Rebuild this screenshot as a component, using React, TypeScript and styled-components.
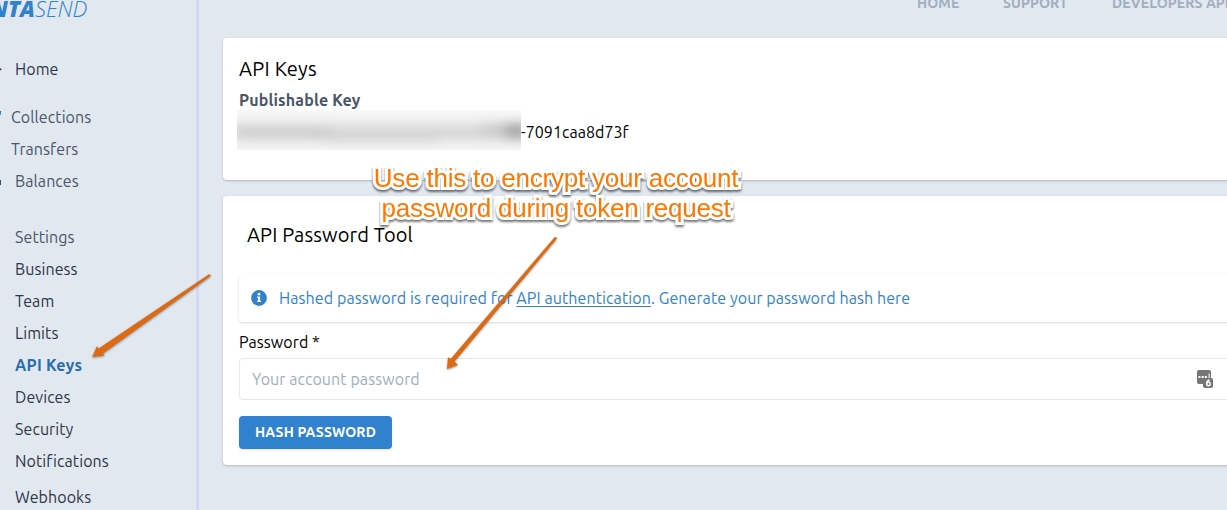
import React from "react";
import styled, { createGlobalStyle } from "styled-components";

const GlobalStyle = createGlobalStyle`
  * { box-sizing: border-box; }
  html, body { margin: 0; padding: 0; overflow: hidden; background: #e2e8f0; }
  body { font-family: Ubuntu, "Noto Sans", sans-serif; font-size: 16px; line-height: 24px; color: #000; }
`;

const Page = styled.div`
  position: relative;
  display: flex;
  width: 1227px;
  height: 510px;
  overflow: hidden;
  background: #e2e8f0;
`;

const Sidebar = styled.aside`
  flex: 0 0 199px;
  height: 510px;
  border-right: 3px solid #d4d8f6;
  overflow: hidden;
`;

const Logo = styled.div`
  height: 53px;
  margin-left: -9.5px;
  font: italic 300 22px/17px "Open Sans", sans-serif;
  color: #3182ce;
  white-space: nowrap;
  b { font-weight: 800; }
`;

const NavGroup = styled.nav<{ $gap: number }>`
  display: flex;
  flex-direction: column;
  margin-bottom: ${(p) => p.$gap}px;
`;

const NavItem = styled.a<{ $tone?: "muted" | "active"; $indent?: number }>`
  display: flex;
  align-items: center;
  height: 32px;
  white-space: nowrap;
  letter-spacing: ${(p) => (p.$tone === "active" ? 0.25 : 0.08)}px;
  font-weight: ${(p) => (p.$tone === "active" ? 700 : 400)};
  color: ${(p) => (p.$tone === "active" ? "#2b6cb0" : p.$tone === "muted" ? "#4a5568" : "#2d3748")};
  span { margin-left: ${(p) => p.$indent ?? 15}px; }
  svg { width: 2px; height: 32px; flex: none; }
  svg + span { margin-left: ${(p) => (p.$indent ?? 15) - 2}px; }
`;

const Content = styled.main`
  flex: 1;
  min-width: 0;
  padding-left: 24px;
`;

const TopNav = styled.header`
  display: flex;
  height: 38px;
  padding-left: 694px;
`;

const TopLink = styled.a<{ $w: number }>`
  flex: 0 0 ${(p) => p.$w}px;
  margin-top: -7px;
  font-size: 14px;
  line-height: 20px;
  font-weight: 700;
  color: #a0aec0;
  white-space: nowrap;
  letter-spacing: 0.1px;
`;

const Card = styled.section<{ $h: number }>`
  width: 1040px;
  height: ${(p) => p.$h}px;
  margin-bottom: 16px;
  padding: 16px;
  background: #fff;
  border-radius: 4px;
  box-shadow: 0 1px 3px rgba(0, 0, 0, 0.1), 0 1px 2px rgba(0, 0, 0, 0.12);
`;

const Title = styled.h2<{ $inset?: boolean }>`
  margin: ${(p) => (p.$inset ? "8px 0 24px 8px" : "0")};
  font-size: 20px;
  line-height: 30px;
  font-weight: 400;
  letter-spacing: ${(p) => (p.$inset ? 0.12 : 0.25)}px;
`;

const KeyLabel = styled.div`
  font-weight: 700;
  line-height: 24px;
  margin-top: 4px;
  color: #4a5568;
  letter-spacing: 0.15px;
`;

const KeyRow = styled.div`
  display: flex;
  align-items: center;
  height: 40px;
  margin: -2px 0 0 -2px;
`;

const Redacted = styled.div`
  width: 284px;
  height: 40px;
  overflow: hidden;
  background: linear-gradient(#f8f8f8, #ececec 40%, #e9e9e9 65%, #f4f4f4);
  svg { display: block; }
`;

const KeyTail = styled.span`
  margin-top: 4px;
  letter-spacing: 0.05px;
`;

const Notice = styled.div`
  display: flex;
  align-items: center;
  height: 48px;
  margin-bottom: 8px;
  padding-left: 12px;
  border-radius: 4px;
  color: #3182ce;
  white-space: nowrap;
  letter-spacing: 0.09px;
  box-shadow: 0 1px 3px rgba(0, 0, 0, 0.1), 0 1px 2px rgba(0, 0, 0, 0.06);
  svg { margin-right: 12px; }
  a { text-decoration: underline; text-underline-offset: 2px; text-decoration-thickness: 1px; }
`;

const FieldLabel = styled.label`
  display: block;
  line-height: 24px;
  letter-spacing: 0.08px;
`;

const Field = styled.div`
  display: flex;
  align-items: center;
  height: 42px;
  margin: 4px 0 16px;
  padding-left: 12px;
  border: 1px solid #e2e8f0;
  border-radius: 4px;
  color: #a0aec0;
  span { width: 944px; letter-spacing: 0.08px; }
`;

const Button = styled.button`
  display: block;
  width: 153px;
  height: 33px;
  padding: 0 0 1px;
  border: 0;
  border-radius: 4px;
  background: #3182ce;
  color: #fff;
  font: 700 14px/20px Ubuntu, "Noto Sans", sans-serif;
  letter-spacing: 0.15px;
  white-space: nowrap;
  box-shadow: 0 1px 2px rgba(0, 0, 0, 0.12);
`;

const Annotation = styled.div`
  position: absolute;
  left: 356px;
  top: 163px;
  width: 400px;
  text-align: center;
  font: 26px/30px "Liberation Sans", sans-serif;
  letter-spacing: -0.22px;
  color: #ff7700;
  -webkit-text-stroke: 6px #fff;
  paint-order: stroke fill;
  stroke-linejoin: round;
  white-space: nowrap;
  filter: drop-shadow(0 2px 0.8px rgba(0, 0, 0, 0.55));
  clip-path: inset(5px 0 -10px 0);
`;

const Arrows = styled.svg`
  position: absolute;
  left: 0;
  top: 0;
  filter: drop-shadow(0.5px 1.5px 1px rgba(0, 0, 0, 0.4));
`;

const settings: { label: string; active?: boolean }[] = [
  { label: "Business" },
  { label: "Team" },
  { label: "Limits" },
  { label: "API Keys", active: true },
  { label: "Devices" },
  { label: "Security" },
  { label: "Notifications" },
];

export default function App() {
  return (
    <Page>
      <GlobalStyle />
      <Sidebar>
        <Logo><b>NTA</b>SEND</Logo>
        <NavGroup $gap={16}>
          <NavItem>
            <svg viewBox="0 0 2 32"><path d="M0 15l2 1.2-2 1.2z" fill="#2a4365" /></svg>
            <span>Home</span>
          </NavItem>
        </NavGroup>
        <NavGroup $gap={24}>
          <NavItem $tone="muted" $indent={11}>
            <svg viewBox="0 0 2 32"><path d="M0 10h1.2L.6 14H0z" fill="#2b6cb0" /></svg>
            <span>Collections</span>
          </NavItem>
          <NavItem $tone="muted" $indent={11}><span>Transfers</span></NavItem>
          <NavItem $tone="muted">
            <svg viewBox="0 0 2 32"><path d="M0 15h1v5H0z" fill="#2c5282" /></svg>
            <span>Balances</span>
          </NavItem>
        </NavGroup>
        <NavGroup $gap={4}>
          <NavItem $tone="muted"><span>Settings</span></NavItem>
          {settings.map((s) => (
            <NavItem key={s.label} $tone={s.active ? "active" : undefined}><span>{s.label}</span></NavItem>
          ))}
        </NavGroup>
        <NavGroup $gap={0}>
          <NavItem><span>Webhooks</span></NavItem>
        </NavGroup>
      </Sidebar>

      <Content>
        <TopNav>
          <TopLink $w={86}>HOME</TopLink>
          <TopLink $w={109}>SUPPORT</TopLink>
          <TopLink $w={120}>DEVELOPERS API</TopLink>
        </TopNav>
        <Card $h={142}>
          <Title>API Keys</Title>
          <KeyLabel>Publishable Key</KeyLabel>
          <KeyRow>
            <Redacted>
              <svg width="284" height="40" viewBox="0 0 284 40">
                <defs>
                  <filter id="smear" x="-10%" y="-100%" width="120%" height="300%">
                    <feGaussianBlur stdDeviation="7 5" />
                  </filter>
                </defs>
                <g filter="url(#smear)" fill="#8c8c8c">
                  <rect x="-2" y="15" width="92" height="14" opacity=".27" />
                  <rect x="88" y="16" width="112" height="16" opacity=".2" />
                  <rect x="200" y="16" width="48" height="12" opacity=".2" />
                  <rect x="246" y="13" width="26" height="15" opacity=".3" />
                  <rect x="270" y="13" width="20" height="16" opacity=".7" />
                </g>
              </svg>
            </Redacted>
            <KeyTail>-7091caa8d73f</KeyTail>
          </KeyRow>
        </Card>
        <Card $h={269}>
          <Title $inset>API Password Tool</Title>
          <Notice>
            <svg width="16" height="16" viewBox="0 0 16 16">
              <circle cx="8" cy="8" r="7.9" fill="#3182ce" />
              <path d="M6.2 6.6h2.9v4.2h.9v1.3H6.1v-1.3H7V7.9h-.8z" fill="#fff" />
              <circle cx="8" cy="4.2" r="1.35" fill="#fff" />
            </svg>
            <div>Hashed password is required for <a>API authentication</a>. Generate your password hash here</div>
          </Notice>
          <FieldLabel>Password *</FieldLabel>
          <Field>
            <span>Your account password</span>
            <svg width="18" height="20" viewBox="0 0 18 20">
              <rect x="1" y="1" width="14" height="14" rx="2" fill="#757575" />
              <path d="M2.4 7h2v2h-2zM5.6 7h2v2h-2zM8.8 7h2v2h-2z" fill="#fff" />
              <path d="M12.6 4.5h1.1v4.8h-1.1z" fill="#fff" />
              <rect x="7" y="9" width="10" height="10" rx="2" fill="#757575" />
              <path d="M13.6 11.3h-1.5q-1.4.7-1.4 3.4a1.5 1.7 0 1 0 3.4 0a1.5 1.5 0 0 0-3.2-.2" fill="none" stroke="#fff" strokeWidth="1.5" />
            </svg>
          </Field>
          <Button>HASH PASSWORD</Button>
        </Card>
      </Content>

      <Arrows width="1227" height="510" viewBox="0 0 1227 510">
        <g fill="#dc6a12" strokeLinejoin="round">
          <path d="M209 274.2L211 275.3L209.6 276.8L103 353.4L104.5 355.6L92.2 357L97 346L98.6 348.5Z" />
          <path d="M554.6 237.2L556.8 237.2L556.6 239L454.5 361.5L458 365L447 369L448 357.5L451 358.5Z" />
        </g>
      </Arrows>
      <Annotation>
        Use this to encrypt your account
        <br />
        password during token request
      </Annotation>
    </Page>
  );
}
